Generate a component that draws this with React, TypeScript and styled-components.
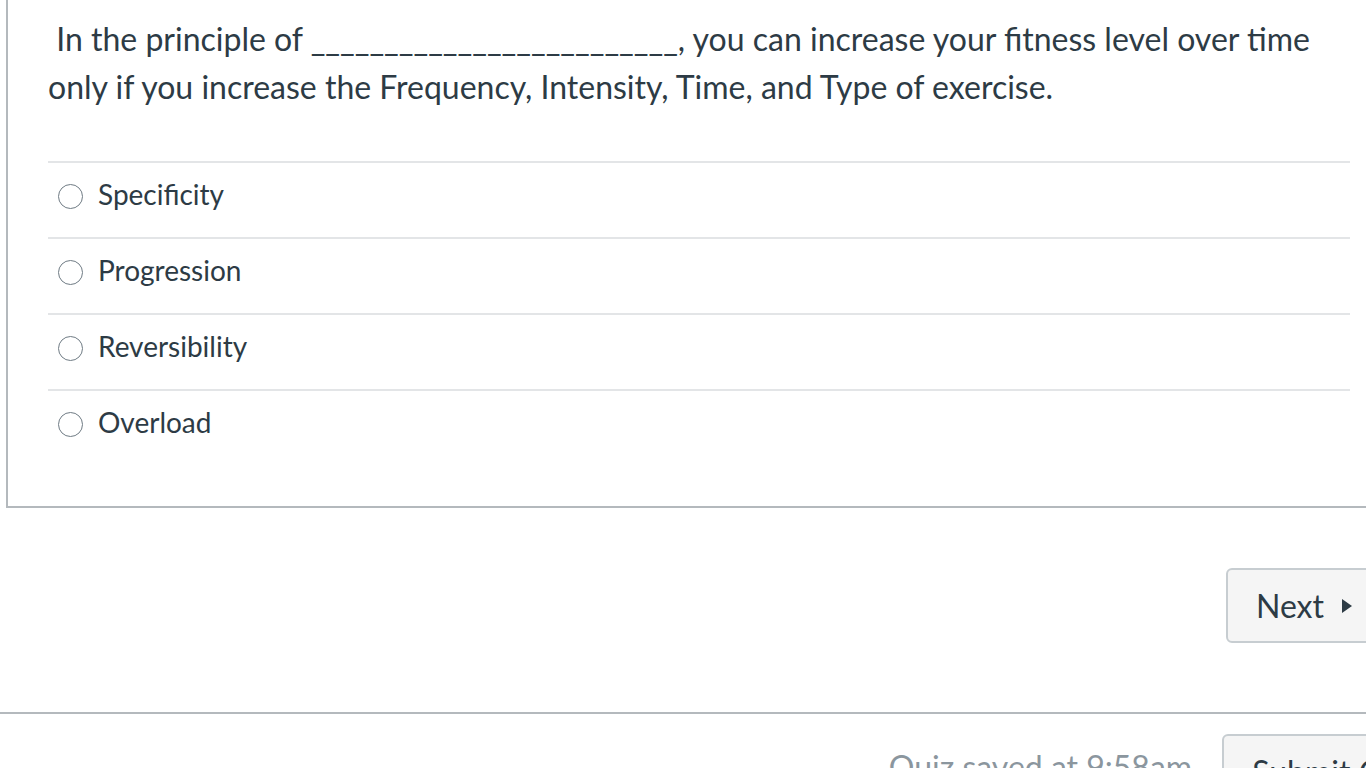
import React from "react";
import styled, { createGlobalStyle } from "styled-components";

const GlobalStyle = createGlobalStyle`
  html, body {
    margin: 0;
    padding: 0;
    background: #ffffff;
    overflow: hidden;
  }
  body {
    font-family: Lato, "Open Sans", "Liberation Sans", sans-serif;
    color: #2d3b45;
  }
`;

const Page = styled.div`
  width: 1366px;
  height: 768px;
  overflow: hidden;
  padding-left: 6px;
  box-sizing: border-box;
`;

const QuestionPanel = styled.div`
  border-left: 2px solid #b4b9bd;
  border-bottom: 2px solid #b4b9bd;
  padding: 15px 0 41px 40px;
`;

const QuestionText = styled.p`
  margin: 0;
  font-size: 32px;
  line-height: 48px;
  padding-right: 40px;
`;

const AnswerList = styled.div`
  margin: 50px 16px 0 0;
`;

const AnswerRow = styled.label`
  display: flex;
  align-items: flex-start;
  gap: 15px;
  height: 76px;
  box-sizing: border-box;
  padding: 14px 0 0 10px;
  border-top: 2px solid #e3e5e7;
  font-size: 28px;
  line-height: 34px;
`;

const Radio = styled.span`
  width: 25px;
  height: 25px;
  border-radius: 50%;
  border: 1.5px solid #6f7b84;
  box-sizing: border-box;
  margin-top: 7px;
  flex-shrink: 0;
`;

const NavRow = styled.div`
  display: flex;
  justify-content: flex-end;
  margin-top: 60px;
  margin-right: -16px;
`;

const Button = styled.button`
  display: flex;
  align-items: center;
  gap: 18px;
  font-family: inherit;
  font-size: 32px;
  color: #2d3b45;
  background: #f5f5f5;
  border: 2px solid #c7cdd1;
  border-radius: 6px;
  height: 75px;
  padding: 0 28px;
`;

const Arrow = styled.span`
  width: 0;
  height: 0;
  border-top: 7px solid transparent;
  border-bottom: 7px solid transparent;
  border-left: 10px solid #2d3b45;
`;

const Divider = styled.hr`
  margin: 69px 0 0 -6px;
  border: 0;
  border-top: 2px solid #b4b9bd;
`;

const Footer = styled.div`
  display: flex;
  justify-content: flex-end;
  align-items: flex-start;
  gap: 30px;
  margin-top: 20px;
  margin-right: -88px;
`;

const SavedText = styled.span`
  font-size: 32px;
  color: #8b969e;
  margin-top: 13px;
`;

const answers = ["Specificity", "Progression", "Reversibility", "Overload"];

export default function App() {
  return (
    <>
      <GlobalStyle />
      <Page>
        <QuestionPanel>
          <QuestionText>
            &nbsp;In the principle of _________________________, you can increase your fitness level over time only if you increase the Frequency, Intensity, Time, and Type of exercise.
          </QuestionText>
          <AnswerList>
            {answers.map((a) => (
              <AnswerRow key={a}>
                <Radio />
                {a}
              </AnswerRow>
            ))}
          </AnswerList>
        </QuestionPanel>
        <NavRow>
          <Button>
            Next <Arrow />
          </Button>
        </NavRow>
        <Divider />
        <Footer>
          <SavedText>Quiz saved at 9:58am</SavedText>
          <Button>Submit Quiz</Button>
        </Footer>
      </Page>
    </>
  );
}
